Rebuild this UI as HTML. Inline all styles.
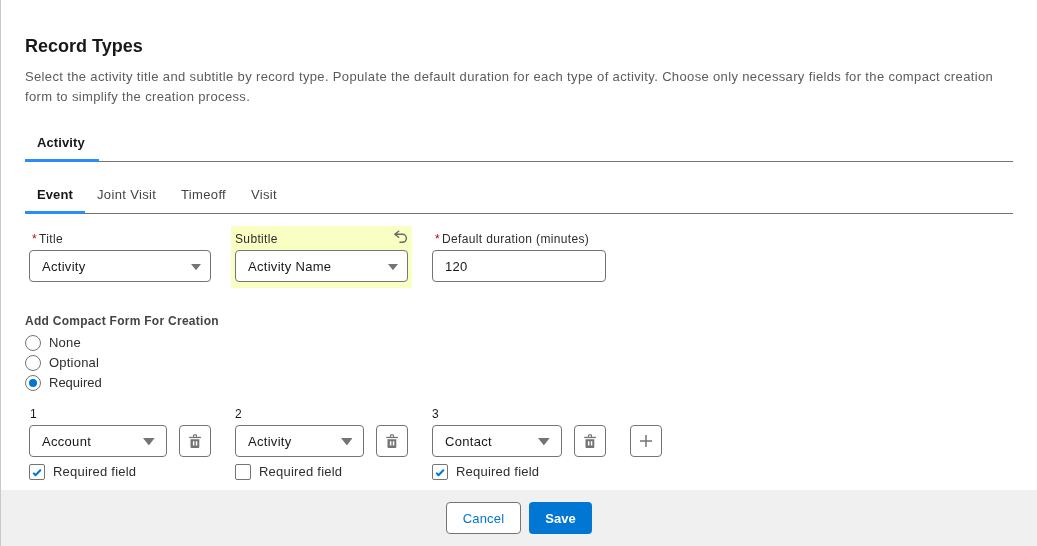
<!DOCTYPE html>
<html><head><meta charset="utf-8">
<style>
*{box-sizing:border-box;margin:0;padding:0}
html,body{width:1037px;height:546px;overflow:hidden;background:#fff;font-family:"Liberation Sans",sans-serif;color:#181818}
.a{position:absolute;white-space:nowrap}
#leftline{position:absolute;left:0;top:0;width:1px;height:546px;background:#c9c9c9}
h1{position:absolute;left:25px;top:35px;font-size:18px;font-weight:bold;line-height:22px;color:#181818;letter-spacing:0}
.desc{position:absolute;left:25px;top:67px;font-size:13px;line-height:20px;color:#5c5c5c;white-space:nowrap;letter-spacing:.355px}
.tabline{position:absolute;left:25px;width:988px;height:1px;background:#747474}
.tabbar{position:absolute;height:3px;background:#2d8cf5}
.tab{position:absolute;font-size:13px;line-height:16px;color:#444;white-space:nowrap;letter-spacing:.35px}
.tab.b{font-weight:bold;color:#181818;letter-spacing:.1px}
.lbl{position:absolute;font-size:12px;line-height:16px;color:#2e2e2e;white-space:nowrap;letter-spacing:.35px}
.req{color:#ba0517;margin-right:2px}
.box{position:absolute;border:1px solid #747474;border-radius:4px;background:#fff;height:32px}
.box .t{position:absolute;left:12px;top:8px;font-size:13px;line-height:16px;color:#181818;white-space:nowrap;letter-spacing:.3px}
.arr{position:absolute;width:0;height:0;border-left:5px solid transparent;border-right:5px solid transparent;border-top:6px solid #747474}
.yellow{position:absolute;left:231px;top:226px;width:181px;height:62px;background:#f9ffc2}
.radio{position:absolute;left:25px;width:16px;height:16px;border:1px solid #747474;border-radius:50%;background:#fff}
.radio .dot{position:absolute;left:3px;top:3px;width:8px;height:8px;border-radius:50%;background:#0176d3}
.rt{position:absolute;left:49px;font-size:13px;line-height:16px;color:#2e2e2e;white-space:nowrap;letter-spacing:.22px}
.cb{position:absolute;width:16px;height:16px;border:1px solid #747474;border-radius:2px;background:#fff}
.cb svg{position:absolute;left:0;top:0}
.footer{position:absolute;left:1px;top:490px;width:1036px;height:56px;background:#f0f0f0}
.btn{position:absolute;top:502px;height:32px;border-radius:4px;font-size:13px;text-align:center;white-space:nowrap}
.ib svg{position:absolute;left:0;top:0}
</style></head>
<body><div id="root" style="position:absolute;left:0;top:0;width:1037px;height:546px;will-change:transform">
<div id="leftline"></div>
<h1>Record Types</h1>
<div class="desc">Select the activity title and subtitle by record type. Populate the default duration for each type of activity. Choose only necessary fields for the compact creation<br>form to simplify the creation process.</div>

<div class="tab b" style="left:37px;top:135px">Activity</div>
<div class="tabline" style="top:161px"></div>
<div class="tabbar" style="left:25px;top:159px;width:74px"></div>

<div class="tab b" style="left:37px;top:187px">Event</div>
<div class="tab" style="left:97px;top:187px">Joint Visit</div>
<div class="tab" style="left:181px;top:187px">Timeoff</div>
<div class="tab" style="left:251px;top:187px">Visit</div>
<div class="tabline" style="top:213px"></div>
<div class="tabbar" style="left:25px;top:211px;width:60px"></div>

<!-- Title -->
<div class="lbl" style="left:32px;top:231px"><span class="req">*</span>Title</div>
<div class="box" style="left:29px;top:250px;width:182px"><span class="t">Activity</span><svg class="a" style="left:161.1px;top:12.7px" width="10" height="6.2" viewBox="0 0 10 6.2"><path d="M0 0H10L5 6.2Z" fill="#747474"/></svg></div>

<div class="yellow"></div>
<div class="lbl" style="left:235px;top:231px">Subtitle</div>
<svg class="a" style="left:390px;top:226px" width="22" height="22" viewBox="0 0 22 22"><path d="M8.7 5.2 L4.8 8.3 L8.7 11.3 M4.8 8.3 H12.4 A4 4 0 0 1 12.4 16.3 H10" fill="none" stroke="#686868" stroke-width="1.45" stroke-linecap="round" stroke-linejoin="round"/></svg>
<div class="box" style="left:235px;top:250px;width:173px"><span class="t">Activity Name</span><svg class="a" style="left:152.1px;top:12.7px" width="10" height="6.2" viewBox="0 0 10 6.2"><path d="M0 0H10L5 6.2Z" fill="#747474"/></svg></div>

<div class="lbl" style="left:435px;top:231px"><span class="req">*</span>Default duration (minutes)</div>
<div class="box" style="left:432px;top:250px;width:174px"><span class="t">120</span></div>

<div class="lbl" style="left:25px;top:313px;font-weight:bold;color:#444;letter-spacing:.27px">Add Compact Form For Creation</div>
<div class="radio" style="top:335px"></div><div class="rt" style="top:335px">None</div>
<div class="radio" style="top:355px"></div><div class="rt" style="top:355px">Optional</div>
<div class="radio" style="top:375px"><div class="dot"></div></div><div class="rt" style="top:375px;letter-spacing:0">Required</div>

<div class="lbl" style="left:30px;top:406px;color:#181818">1</div>
<div class="lbl" style="left:235px;top:406px;color:#181818">2</div>
<div class="lbl" style="left:432px;top:406px;color:#181818">3</div>

<div class="box" style="left:29px;top:425px;width:138px"><span class="t">Account</span><svg class="a" style="left:113.1px;top:12.1px" width="11.7" height="7.4" viewBox="0 0 11.7 7.4"><path d="M0 0H11.7L5.85 7.4Z" fill="#747474"/></svg></div>
<div class="box ib" style="left:179px;top:425px;width:32px"><svg width="30" height="30" viewBox="1 1 30 30"><use href="#trash"/></svg></div>
<div class="box" style="left:235px;top:425px;width:129px"><span class="t">Activity</span><svg class="a" style="left:104.5px;top:12.1px" width="11.7" height="7.4" viewBox="0 0 11.7 7.4"><path d="M0 0H11.7L5.85 7.4Z" fill="#747474"/></svg></div>
<div class="box ib" style="left:376px;top:425px;width:32px"><svg width="30" height="30" viewBox="1 1 30 30"><use href="#trash"/></svg></div>
<div class="box" style="left:432px;top:425px;width:130px"><span class="t">Contact</span><svg class="a" style="left:105.1px;top:12.1px" width="11.7" height="7.4" viewBox="0 0 11.7 7.4"><path d="M0 0H11.7L5.85 7.4Z" fill="#747474"/></svg></div>
<div class="box ib" style="left:574px;top:425px;width:32px"><svg width="30" height="30" viewBox="1 1 30 30"><use href="#trash"/></svg></div>
<div class="box ib" style="left:630px;top:425px;width:32px"><svg width="30" height="30" viewBox="1 1 30 30"><path d="M10 16 H22 M16 10 V22" stroke="#747474" stroke-width="1.5"/></svg></div>

<svg width="0" height="0" style="position:absolute"><defs>
<g id="trash" fill="#747474">
<rect x="10.2" y="11.8" width="11.7" height="1.3"/>
<path d="M14 11.9 V10.6 Q14 9.3 15.3 9.3 H16.8 Q18 9.3 18 10.6 V11.9 H17 V10.4 H15 V11.9 Z"/>
<path d="M11.5 14.2 H20.3 V22 Q20.3 23 19.3 23 H12.5 Q11.5 23 11.5 22 Z M13.9 16.2 V20.6 H15.4 V16.2 Z M16.8 16.2 V20.6 H18.3 V16.2 Z" fill-rule="evenodd"/>
</g></defs></svg>

<div class="cb" style="left:29px;top:464px"><svg width="14" height="14" viewBox="1 1 14 14"><path d="M4.8 9.4 L6.5 11.2 L11.3 6.2" fill="none" stroke="#0176d3" stroke-width="2" stroke-linecap="round" stroke-linejoin="round"/></svg></div><div class="rt" style="left:53px;top:464px">Required field</div>
<div class="cb" style="left:235px;top:464px"></div><div class="rt" style="left:259px;top:464px">Required field</div>
<div class="cb" style="left:432px;top:464px"><svg width="14" height="14" viewBox="1 1 14 14"><path d="M4.8 9.4 L6.5 11.2 L11.3 6.2" fill="none" stroke="#0176d3" stroke-width="2" stroke-linecap="round" stroke-linejoin="round"/></svg></div><div class="rt" style="left:456px;top:464px">Required field</div>

<div class="footer"></div>
<div class="btn" style="left:446px;width:75px;border:1px solid #747474;background:#fff;color:#0176d3;line-height:30px;padding-top:1px;letter-spacing:.15px">Cancel</div>
<div class="btn" style="left:529px;width:63px;background:#0176d3;color:#fff;font-weight:bold;line-height:32px;padding-top:1px">Save</div>
</div></body></html>
